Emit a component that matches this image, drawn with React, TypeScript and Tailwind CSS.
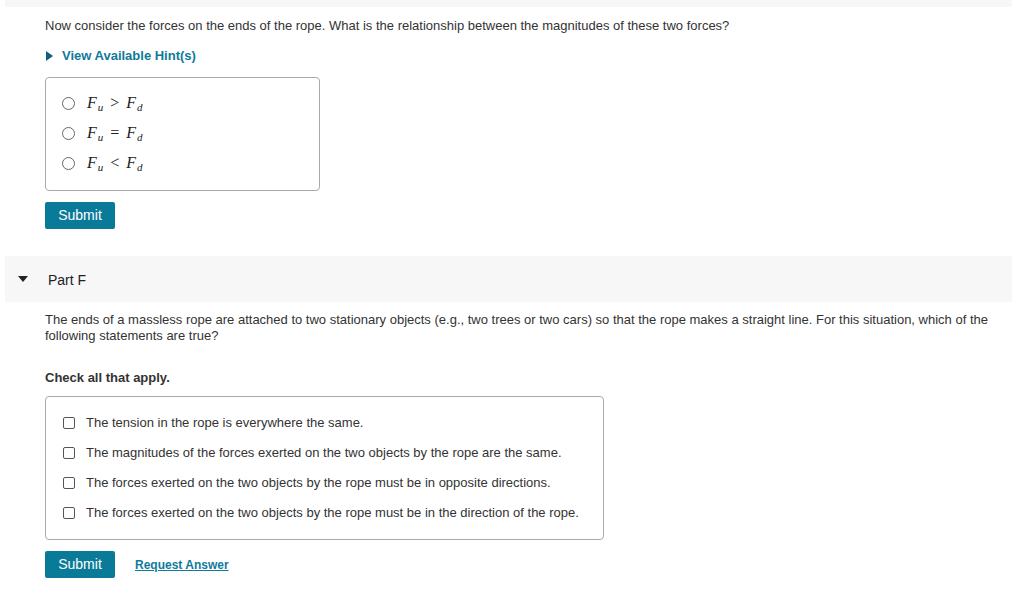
import React from "react";

const F = ({ sub }: { sub: string }) => (
  <span className="italic">
    F<span className="text-[11px] relative top-[3px] ml-[1px]">{sub}</span>
  </span>
);

const Math = ({ op }: { op: string }) => (
  <span className="font-['Liberation_Serif','DejaVu_Serif',serif] text-[16px] text-[#222] flex items-baseline">
    <F sub="u" />
    <span className="mx-[7px]">{op}</span>
    <F sub="d" />
  </span>
);

const Radio = ({ op }: { op: string }) => (
  <div className="h-[30px] flex items-center">
    <span className="w-[13px] h-[13px] rounded-full border border-[#666] ml-[16px] mr-[12px] shrink-0" />
    <Math op={op} />
  </div>
);

const Check = ({ text }: { text: string }) => (
  <div className="h-[30px] flex items-center">
    <span className="w-[12px] h-[12px] rounded-[2px] border border-[#555] ml-[17px] mr-[11px] shrink-0" />
    <span className="text-[13px] text-[#333]">{text}</span>
  </div>
);

const SubmitBtn = () => (
  <button className="w-[70px] h-[27px] bg-[#0a7a99] text-white text-[14px] rounded-[2px] flex items-center justify-center">
    Submit
  </button>
);

export default function App() {
  return (
    <div className="w-[1014px] h-[591px] bg-white font-['Liberation_Sans',Arial,sans-serif] text-[13px] text-[#333] overflow-hidden">
      <div className="ml-[5px] mr-[2px] h-[7px] bg-[#f7f7f7]" />
      <div className="pl-[45px]">
        <p className="mt-[11px] leading-[15px]">
          Now consider the forces on the ends of the rope. What is the relationship between the magnitudes of these two forces?
        </p>
        <div className="mt-[15px] flex items-center h-[16px] text-[#0f7a9b] font-bold text-[13px]">
          <svg width="8" height="10" viewBox="0 0 8 10" className="mr-[8px] ml-[1px]">
            <path d="M0 0 L7 5 L0 10 Z" fill="#0d5f7a" />
          </svg>
          View Available Hint(s)
        </div>
        <div className="mt-[13px] w-[275px] h-[114px] border border-[#aaa] rounded-[4px] pt-[10px]">
          <Radio op=">" />
          <Radio op="=" />
          <Radio op="<" />
        </div>
        <div className="mt-[11px]">
          <SubmitBtn />
        </div>
      </div>
      <div className="mt-[27px] ml-[5px] mr-[2px] h-[46px] bg-[#f7f7f7] flex items-center">
        <svg width="10" height="6" viewBox="0 0 10 6" className="ml-[13px] mr-[20px]">
          <path d="M0 0 L10 0 L5 6 Z" fill="#222" />
        </svg>
        <span className="text-[14px] text-[#222] mt-[2px]">Part F</span>
      </div>
      <div className="pl-[45px] pr-[20px]">
        <p className="mt-[10px] leading-[16px]">
          The ends of a massless rope are attached to two stationary objects (e.g., two trees or two cars) so that the rope makes a straight line. For this situation, which of the following statements are true?
        </p>
        <p className="mt-[26px] font-bold text-[13px] leading-[16px]">Check all that apply.</p>
        <div className="mt-[10px] w-[559px] h-[144px] border border-[#aaa] rounded-[4px] pt-[11px]">
          <Check text="The tension in the rope is everywhere the same." />
          <Check text="The magnitudes of the forces exerted on the two objects by the rope are the same." />
          <Check text="The forces exerted on the two objects by the rope must be in opposite directions." />
          <Check text="The forces exerted on the two objects by the rope must be in the direction of the rope." />
        </div>
        <div className="mt-[11px] flex items-center">
          <SubmitBtn />
          <a className="ml-[20px] text-[#0f7a9b] font-bold text-[12px] underline">Request Answer</a>
        </div>
      </div>
    </div>
  );
}
